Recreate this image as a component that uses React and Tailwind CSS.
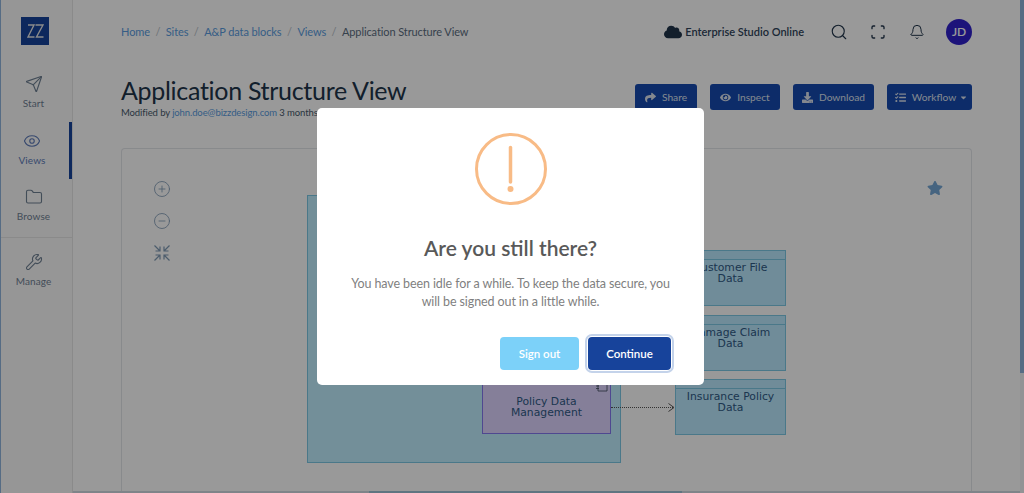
import { Send, Eye, Folder, Wrench, CirclePlus, CircleMinus, Search, Bell, Scan } from "lucide-react";
import { FaCloud, FaShare, FaEye, FaDownload, FaStar, FaCaretDown, FaTasks } from "react-icons/fa";

const navItems = [
  { label: "Start", icon: Send, h: "h-[50px]", pt: "pt-[3px]" },
  { label: "Views", icon: Eye, h: "h-[57px]", pt: "pt-[10px]", active: true },
  { label: "Browse", icon: Folder, h: "h-[58px]", pt: "pt-[9px]" },
  { label: "Manage", icon: Wrench, h: "h-[60px]", pt: "pt-[15px]", divider: true },
];

const actions = [
  { label: "Share", icon: FaShare, w: "w-[62px]" },
  { label: "Inspect", icon: FaEye, w: "w-[70px]" },
  { label: "Download", icon: FaDownload, w: "w-[81px]" },
  { label: "Workflow", icon: FaTasks, w: "w-[85px] pl-[4px]", caret: true },
];

const crumbs = ["Home", "Sites", "A&P data blocks", "Views"];

function CollapseIcon() {
  return (
    <svg width="18" height="18" viewBox="0 0 18 18" fill="none" stroke="#7f9ab5" strokeWidth="1.2">
      <path d="M1.5 1.5 7 7M7 2.5V7H2.5" />
      <path d="M16.5 1.5 11 7M11 2.5V7h4.5" />
      <path d="M1.5 16.5 7 11M7 15.5V11H2.5" />
      <path d="M16.5 16.5 11 11M11 15.5V11h4.5" />
    </svg>
  );
}

function DataBox({ title, top }) {
  return (
    <div className={`absolute left-[553px] w-[111px] h-[56px] border border-[#7cc8e4] bg-[#bbe9ff] ${top}`}>
      <div className="h-[9px] border-b border-[#7cc8e4]" />
      <div className="text-center text-[10.8px] leading-[11px] pt-[2px] text-[#2f5a85] font-['DejaVu_Sans',sans-serif]">
        {title.map((t) => <div key={t}>{t}</div>)}
      </div>
    </div>
  );
}

export default function App() {
  return (
    <div className="relative h-[493px] w-[1024px] overflow-hidden bg-white font-['Lato',sans-serif]">
      <div className="flex h-full">
        {/* sidebar */}
        <aside className="w-[73px] shrink-0 border-l border-r border-l-[#8fb4dc] border-r-[#e6e6e6] bg-[#fbfbfb]">
          <div className="flex h-[72px] pb-[10px] pl-[20px] items-center">
            <div className="flex h-[28px] w-[28px] items-center justify-center bg-[#17439b]">
              <svg width="17" height="14" viewBox="0 0 17 14" fill="none" stroke="#e8e8e8" strokeWidth="1.4">
                <path d="M1 1h6L1 13h6.500" />
                <path d="M8.500 1h7.500L9.500 13h7" />
              </svg>
            </div>
          </div>
          {navItems.map((item) => {
            const Icon = item.icon;
            return (
              <div
                key={item.label}
                className={`flex flex-col items-center pr-[6px] ${item.h} ${item.pt} ${item.divider ? "border-t border-[#e6e6e6]" : ""} ${item.active ? "text-[#5d7ab8] border-r-[3px] border-[#17439b] pr-[3px]" : "text-[#6f8093]"}`}
              >
                <Icon size={18} strokeWidth={1.5} />
                <span className="mt-[3px] text-[10px] leading-[14px] tracking-[0.1px]">{item.label}</span>
              </div>
            );
          })}
        </aside>

        {/* main */}
        <main className="min-w-0 flex-1 pl-[48px] pr-[48px]">
          <header className="flex h-[64px] items-center justify-between">
            <nav className="flex items-center gap-[5.5px] text-[11px] tracking-[-0.1px] text-[#5d6f80]">
              {crumbs.map((c) => (
                <span key={c} className="flex items-center gap-[5.5px]">
                  <span className="text-[#5a9ce0]">{c}</span>
                  <span className="text-[#b5bec7]">/</span>
                </span>
              ))}
              <span className="text-[#5b6d7f]">Application Structure View</span>
            </nav>
            <div className="flex items-center">
              <FaCloud size={18} className="text-[#20344a]" />
              <span className="ml-[3px] text-[11px] font-semibold text-[#30445a]">Enterprise Studio Online</span>
              <Search size={18} strokeWidth={1.5} className="ml-[26px] text-[#20344a]" />
              <Scan size={16} strokeWidth={2} className="ml-[22px] text-[#20344a]" />
              <Bell size={16} strokeWidth={1.5} className="ml-[23px] text-[#20344a]" />
              <div className="ml-[21px] flex h-[26px] w-[26px] items-center justify-center rounded-full bg-[#3020cc] text-[12px] font-semibold text-white">JD</div>
            </div>
          </header>

          <div className="flex h-[84px] items-start justify-between">
            <div className="pt-[9px]">
              <h1 className="text-[25px] leading-[34px] tracking-[-0.3px] text-[#20344a]">Application Structure View</h1>
              <p className="text-[9.5px] leading-[12px] tracking-[-0.1px] text-[#47596b]">
                Modified by <span className="text-[#5a9ce0]">john.doe@bizzdesign.com</span> 3 months ago
              </p>
            </div>
            <div className="flex gap-[13px] pt-[20px]">
              {actions.map((a) => {
                const Icon = a.icon;
                return (
                  <button key={a.label} className={`flex h-[26px] items-center justify-center gap-[6px] rounded-[3px] bg-[#174ab0] text-[10.2px] text-[#dce3ee] ${a.w}`}>
                    <Icon size={11} />
                    <span className="pt-[1px]">{a.label}</span>
                    {a.caret && <FaCaretDown size={9} className="-ml-[3px]" />}
                  </button>
                );
              })}
            </div>
          </div>

          {/* diagram card */}
          <section className="relative h-[343px] rounded-t-[4px] border border-b-0 border-[#e3e6ea] bg-white">
            <div className="absolute left-[31px] top-[31px] flex flex-col items-center gap-[14px] text-[#7f9ab5]">
              <CirclePlus size={18} strokeWidth={1.1} />
              <CircleMinus size={18} strokeWidth={1.1} />
              <CollapseIcon />
            </div>
            <FaStar size={16} className="absolute left-[805px] top-[31px] text-[#75a7d5]" />

            <div className="absolute left-[185px] top-[46px] h-[268px] w-[314px] border border-[#7cc8e4] bg-[#c0eeff]" />
            <div className="absolute left-[360px] top-[235px] h-[50px] w-[129px] border border-[#8479f0] bg-[#ded4ff] pt-[10px] text-center text-[10.8px] leading-[11px] text-[#2f5a85] font-['DejaVu_Sans',sans-serif]">
              <div className="mt-[1px]">Policy Data</div>
              <div>Management</div>
            </div>
            <svg className="absolute left-[473px] top-[235px]" width="14" height="8" viewBox="0 0 14 8" fill="none" stroke="#3c4a5a" strokeWidth="0.8">
              <path d="M3 0v7h9V0" />
              <path d="M1 2h3M1 4.500h3" />
            </svg>
            <div className="absolute left-[489px] top-[258px] w-[62px] border-t border-dotted border-[#555]" />
            <svg className="absolute left-[546px] top-[254px]" width="7" height="9" viewBox="0 0 7 9" fill="none" stroke="#555">
              <path d="M0.5 0.5 6 4.5 0.5 8.5" />
            </svg>
            <DataBox title={["Customer File", "Data"]} top="top-[101px]" />
            <DataBox title={["Damage Claim", "Data"]} top="top-[166px]" />
            <DataBox title={["Insurance Policy", "Data"]} top="top-[230px]" />
          </section>
          <div className="-mx-[48px] h-[2px] bg-[#d4dce4]">
            <div className="ml-[296px] h-full w-[313px] bg-[#9fc4d8]" />
          </div>
        </main>

        {/* page scrollbar */}
        <div className="flex w-[4px] shrink-0 flex-col">
          <div className="h-[373px] bg-[#8fb4dc]" />
          <div className="flex-1 bg-[#f4f6f8]" />
        </div>
      </div>

      {/* idle dialog */}
      <div className="absolute inset-0 bg-black/40">
        <div className="absolute left-[317px] top-[108px] h-[277px] w-[387px] rounded-[5px] bg-white">
          <div className="flex justify-center pt-[25px]">
            <svg width="72" height="72" viewBox="0 0 72 72" fill="none">
              <circle cx="36" cy="36" r="34.5" stroke="#f8bb86" strokeWidth="3" />
              <line x1="35.500" y1="14.500" x2="35.500" y2="49" stroke="#f8bb86" strokeWidth="3.500" strokeLinecap="round" />
              <circle cx="35.500" cy="56" r="3" fill="#f8bb86" />
            </svg>
          </div>
          <h2 className="mt-[28px] text-center text-[21px] font-semibold leading-[30px] text-[#595959]">Are you still there?</h2>
          <p className="mt-[12px] px-[30px] text-center text-[12.5px] leading-[18px] tracking-[-0.1px] text-[#7f7f7f]">
            You have been idle for a while. To keep the data secure, you will be signed out in a little while.
          </p>
          <div className="mt-[26px] flex justify-end gap-[9px] pr-[33px]">
            <button className="h-[33px] w-[79px] rounded-[4px] bg-[#7cd1f9] text-[11.5px] font-semibold text-white">Sign out</button>
            <button className="h-[33px] w-[83px] rounded-[4px] bg-[#17439b] text-[11.5px] font-semibold text-white ring-2 ring-[#c4d3ea] ring-offset-1">Continue</button>
          </div>
        </div>
      </div>
    </div>
  );
}
